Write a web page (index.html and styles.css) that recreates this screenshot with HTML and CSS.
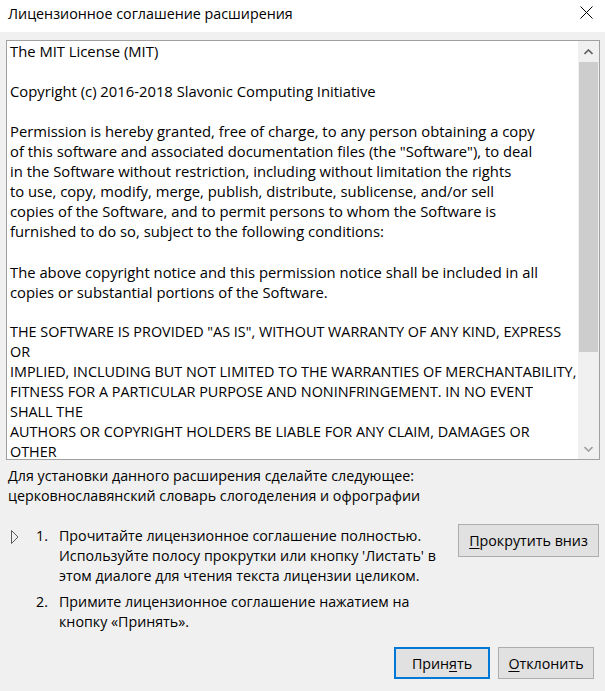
FILE: index.html
```html
<!DOCTYPE html>
<html lang="ru">
<head>
<meta charset="utf-8">
<title>Лицензионное соглашение расширения</title>
<link rel="stylesheet" href="styles.css">
</head>
<body>
<div class="titlebar">
  <span class="title">Лицензионное соглашение расширения</span>
  <svg class="close" width="13" height="13" viewBox="0 0 13 13"><path d="M0.5 0.5 L12.5 12.5 M12.5 0.5 L0.5 12.5" stroke="#000" stroke-width="1" fill="none"/></svg>
</div>
<div class="content">
  <div class="license">
    <div class="license-text">
      <div class="para">The MIT License (MIT)</div>
      <div class="para">Copyright (c) 2016-2018 Slavonic Computing Initiative</div>
      <div class="para">Permission is hereby granted, free of charge, to any person obtaining a copy
of this software and associated documentation files (the "Software"), to deal
in the Software without restriction, including without limitation the rights
to use, copy, modify, merge, publish, distribute, sublicense, and/or sell
copies of the Software, and to permit persons to whom the Software is
furnished to do so, subject to the following conditions:</div>
      <div class="para">The above copyright notice and this permission notice shall be included in all
copies or substantial portions of the Software.</div>
      <div class="para caps">THE SOFTWARE IS PROVIDED "AS IS", WITHOUT WARRANTY OF ANY KIND, EXPRESS
OR
IMPLIED, INCLUDING BUT NOT LIMITED TO THE WARRANTIES OF MERCHANTABILITY,
FITNESS FOR A PARTICULAR PURPOSE AND NONINFRINGEMENT. IN NO EVENT
SHALL THE
AUTHORS OR COPYRIGHT HOLDERS BE LIABLE FOR ANY CLAIM, DAMAGES OR
OTHER</div>
    </div>
    <div class="scrollbar">
      <div class="sb-arrow"><svg width="9" height="6" viewBox="0 0 9 6"><path d="M0.5 5 L4.5 1 L8.5 5" stroke="#606060" stroke-width="1.6" fill="none"/></svg></div>
      <div class="sb-track"><div class="sb-thumb"></div></div>
      <div class="sb-arrow"><svg width="9" height="6" viewBox="0 0 9 6"><path d="M0.5 1 L4.5 5 L8.5 1" stroke="#a0a0a0" stroke-width="1.6" fill="none"/></svg></div>
    </div>
  </div>
  <p class="info">Для установки данного расширения сделайте следующее:<br>церковнославянский словарь слогоделения и офрографии</p>
  <div class="steps-row">
    <svg class="expander" width="8" height="14" viewBox="0 0 8 14"><path d="M0.5 0.5 L7 7 L0.5 13.5 Z" stroke="#5a5a5a" stroke-width="1" fill="none"/></svg>
    <ol class="steps">
      <li><span class="num">1.</span><span class="step-text">Прочитайте лицензионное соглашение полностью. Используйте полосу прокрутки или кнопку 'Листать' в этом диалоге для чтения текста лицензии целиком.</span></li>
      <li><span class="num">2.</span><span class="step-text">Примите лицензионное соглашение нажатием на кнопку «Принять».</span></li>
    </ol>
    <button class="btn btn-scroll"><u>П</u>рокрутить вниз</button>
  </div>
  <div class="actions">
    <button class="btn btn-default">Прин<u>я</u>ть</button>
    <button class="btn"><u>О</u>тклонить</button>
  </div>
</div>
</body>
</html>
```
FILE: styles.css
```css
* { box-sizing: border-box; }
html, body { margin: 0; padding: 0; }
body {
  width: 605px;
  height: 691px;
  background: #f0f0f0;
  font-family: "Open Sans", "Noto Sans", sans-serif;
  font-size: 14.25px;
  color: #000;
  overflow: hidden;
}
.titlebar {
  height: 32px;
  background: #fff;
  display: flex;
  align-items: flex-start;
  justify-content: space-between;
  padding: 4px 12px 0 8px;
}
.title { font-size: 14.3px; line-height: 20px; color: #000; }
.close { display: block; margin-top: 2px; }
.content { padding: 8px 5px 0 6px; }
.license {
  height: 420px;
  border: 1px solid #a0a0a0;
  background: #fff;
  display: flex;
}
.license-text {
  flex: 1;
  font-size: 14.8px;
  line-height: 20.05px;
  padding: 0 0 0 3px;
  overflow: hidden;
}
.para {
  white-space: pre;
  margin-bottom: 20.05px;
}
.caps { font-size: 14.4px; }
.scrollbar {
  width: 21px;
  background: #f0f0f0;
  display: flex;
  flex-direction: column;
}
.sb-arrow {
  height: 21px;
  display: flex;
  align-items: center;
  justify-content: center;
}
.sb-track { flex: 1; }
.sb-thumb {
  margin: 0 1px;
  height: 290px;
  background: #cdcdcd;
}
.info {
  margin: 6px 0 0 2px;
  line-height: 20px;
}
.steps-row {
  display: flex;
  align-items: flex-start;
  margin-top: 20px;
}
.expander { display: block; margin: 4px 0 0 5px; flex: none; }
.steps {
  list-style: none;
  margin: 0 0 0 17px;
  padding: 0;
  width: 412px;
}
.steps li {
  display: flex;
  line-height: 20px;
  margin-bottom: 6px;
}
.num { width: 23px; flex: none; }
.step-text { flex: 1; }
.btn {
  font-family: inherit;
  font-size: 14.25px;
  color: #000;
  background: #e1e1e1;
  border: 1px solid #adadad;
  border-radius: 0;
  height: 32px;
  width: 96px;
  padding: 0;
}
.btn u { text-decoration: underline; text-underline-offset: 2px; }
.btn-scroll {
  width: 141px;
  height: 33px;
  margin-left: auto;
  margin-top: -2px;
  margin-right: 1px;
}
.actions {
  display: flex;
  justify-content: flex-end;
  gap: 8px;
  margin-top: 9px;
  padding-right: 6px;
}
.btn-default { border: 2px solid #0078d7; }
```
